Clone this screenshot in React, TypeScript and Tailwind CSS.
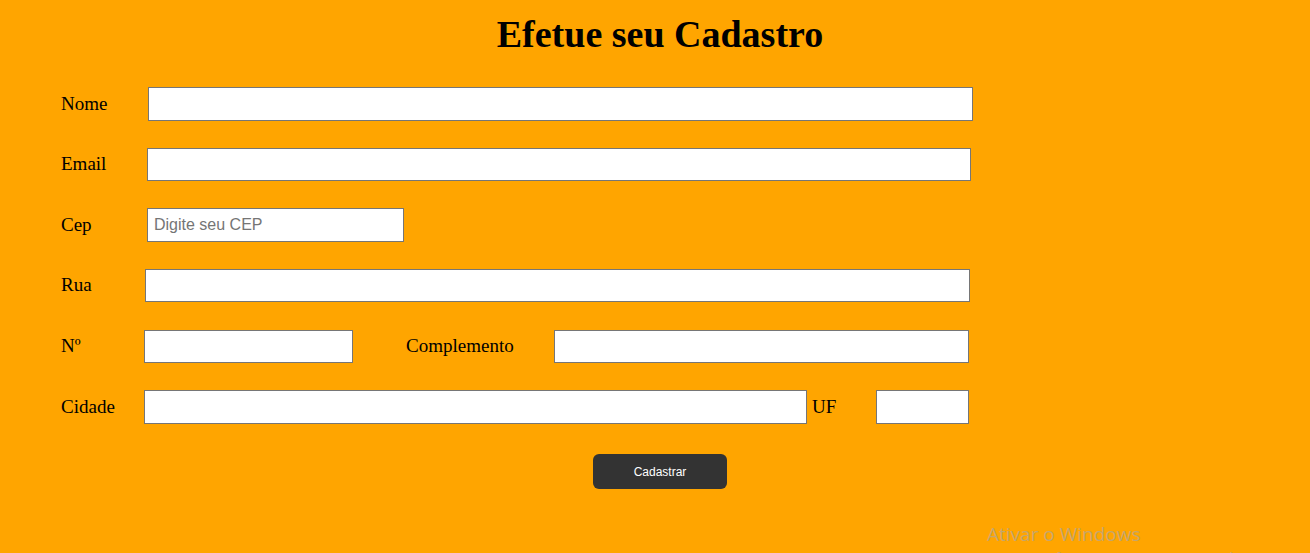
import React from "react";

const serif = "font-['Liberation_Serif','Times_New_Roman',serif]";
const inputBase =
  "bg-white border border-[#767676] px-[6px] text-[16px] font-['Liberation_Sans',Arial,sans-serif] text-black outline-none placeholder:text-[#757575]";
const label = `${serif} text-[19px] text-black`;

export default function App() {
  return (
    <div className="relative h-[553px] w-full overflow-hidden bg-[#ffa500]">
      <h1
        className={`${serif} pt-[12px] pl-[10px] text-center text-[38px] font-bold leading-[44px] text-black`}
      >
        Efetue seu Cadastro
      </h1>

      <form className="mt-[31px] flex flex-col pl-[61px]">
        <div className="flex items-center">
          <label className={`${label} w-[87px]`}>Nome</label>
          <input className={`${inputBase} h-[34px] w-[825px]`} type="text" />
        </div>

        <div className="mt-[27px] flex items-center">
          <label className={`${label} w-[86px]`}>Email</label>
          <input className={`${inputBase} h-[33px] w-[824px]`} type="email" />
        </div>

        <div className="mt-[27px] flex items-center">
          <label className={`${label} w-[86px]`}>Cep</label>
          <input
            className={`${inputBase} h-[34px] w-[257px]`}
            type="text"
            placeholder="Digite seu CEP"
          />
        </div>

        <div className="mt-[27px] flex items-center">
          <label className={`${label} w-[84px]`}>Rua</label>
          <input className={`${inputBase} h-[33px] w-[825px]`} type="text" />
        </div>

        <div className="mt-[28px] flex items-center">
          <label className={`${label} w-[83px]`}>Nº</label>
          <input className={`${inputBase} h-[33px] w-[209px]`} type="text" />
          <label className={`${label} ml-[53px] w-[148px]`}>Complemento</label>
          <input className={`${inputBase} h-[33px] w-[415px]`} type="text" />
        </div>

        <div className="mt-[27px] flex items-center">
          <label className={`${label} w-[83px]`}>Cidade</label>
          <input className={`${inputBase} h-[34px] w-[663px]`} type="text" />
          <label className={`${label} ml-[5px] w-[64px]`}>UF</label>
          <input className={`${inputBase} h-[34px] w-[93px]`} type="text" />
        </div>

        <div className="mt-[30px] flex pl-[532px]">
          <button
            type="button"
            className="h-[35px] w-[134px] rounded-[6px] bg-[#333333] font-['Liberation_Sans',Arial,sans-serif] text-[12px] text-white"
          >
            Cadastrar
          </button>
        </div>
      </form>

      <div className="pointer-events-none absolute left-[987px] top-[521px] font-['Open_Sans','Noto_Sans',sans-serif] text-[#c5a66c]">
        <div className="text-[19px] leading-[27px]">Ativar o Windows</div>
        <div className="text-[13px] leading-[18px]">
          Acesse Configurações para ativar o Windows.
        </div>
      </div>
    </div>
  );
}
